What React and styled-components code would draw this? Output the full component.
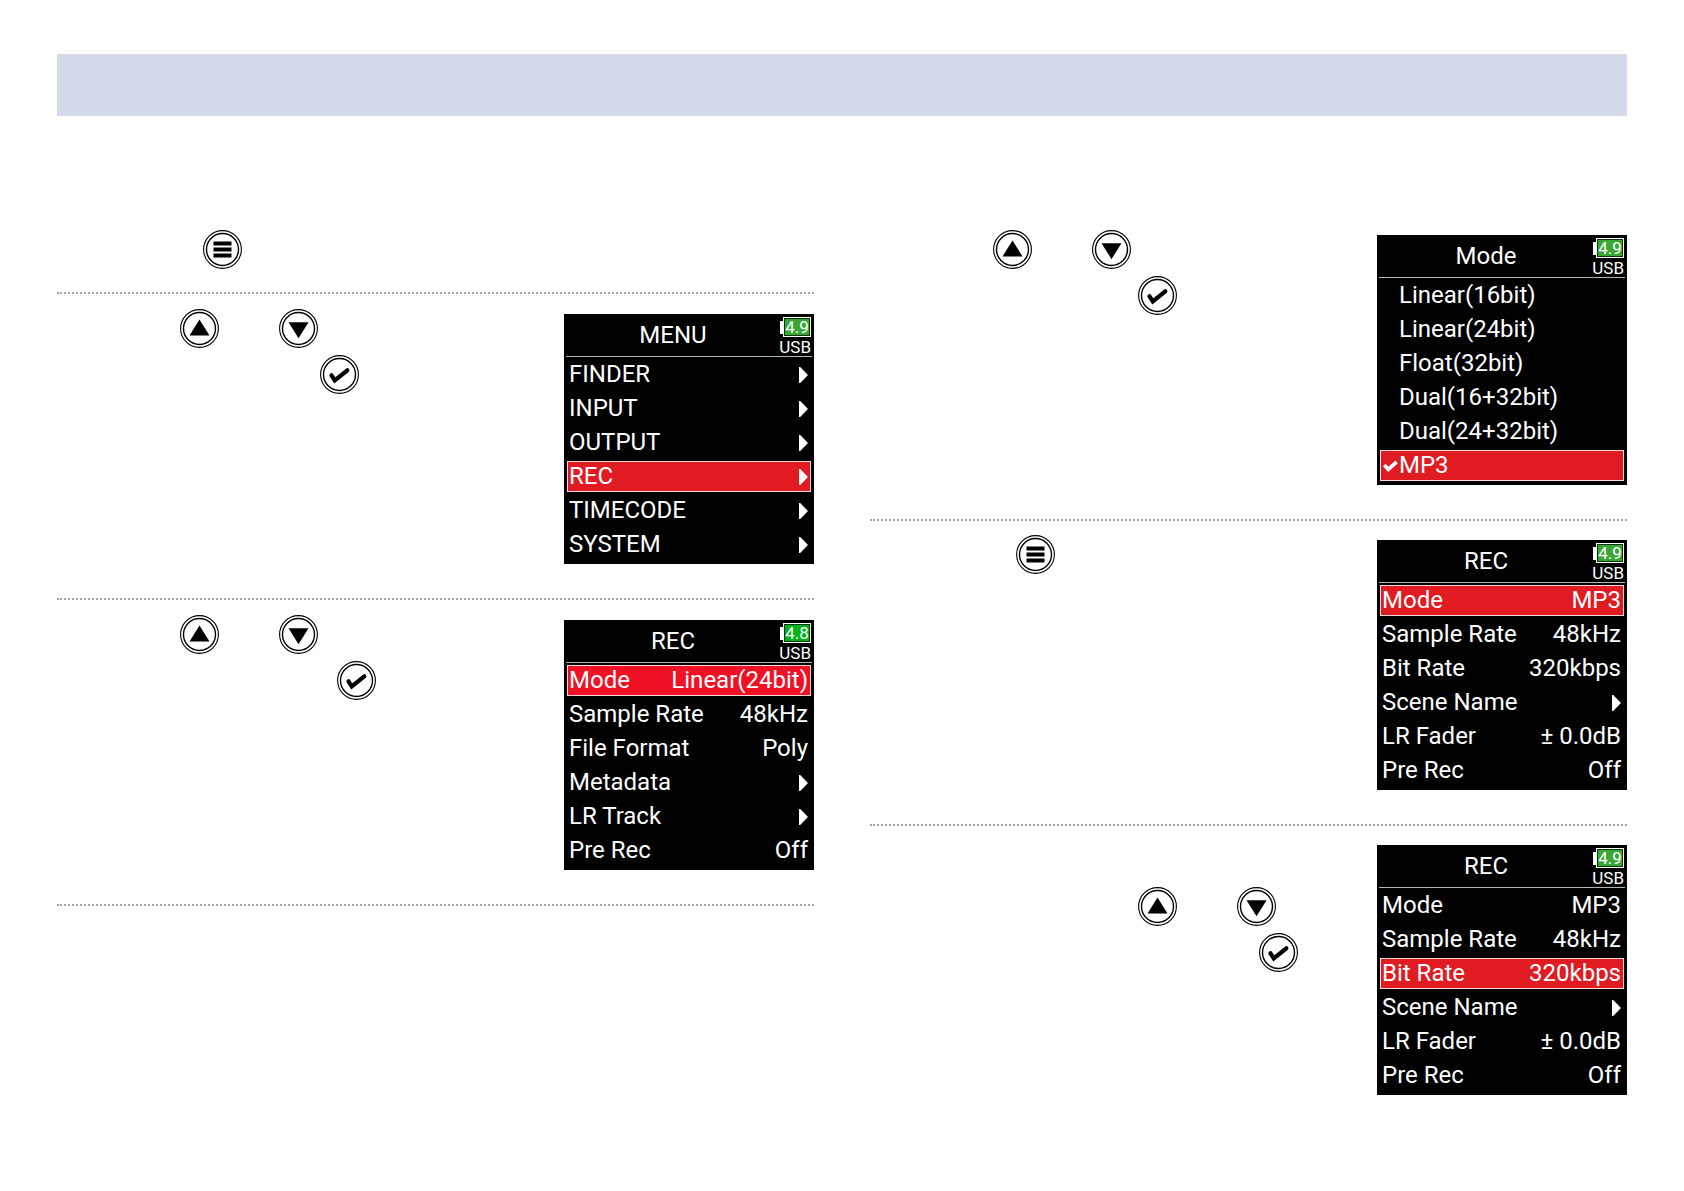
import React from "react";
import styled, { createGlobalStyle } from "styled-components";

const GlobalStyle = createGlobalStyle`
  * { box-sizing: border-box; }
  body { margin: 0; background: #fff; }
  body, button {
    font-family: Roboto, "Liberation Sans", sans-serif;
  }
`;

const Page = styled.div`
  padding: 54px 57px;
`;

const Banner = styled.header`
  height: 62px;
  background: #d5daea;
`;

const Columns = styled.main`
  display: grid;
  grid-template-columns: 1fr 1fr;
  column-gap: 56px;
  align-items: start;
  padding-top: 99px;
`;

const Column = styled.div`
  display: flex;
  flex-direction: column;
`;

const Step = styled.section`
  display: flex;
  justify-content: space-between;
  align-items: flex-start;
  padding: ${(p) => (p.$tight ? 14 : 15)}px 0 23px;
  border-bottom: ${(p) => (p.$ruled ? "2px dotted #a3a3a3" : "0")};
`;

const Instructions = styled.div`
  display: flex;
  flex-direction: column;
  gap: 7px;
  padding-top: ${(p) => (p.$skipLine ? 47 : 0)}px;
`;

const KeyLine = styled.div`
  display: flex;
  gap: 60px;
  padding-left: ${(p) => p.$indent}px;
`;

const KeyButton = styled.button`
  display: block;
  width: 39px;
  height: 39px;
  padding: 0;
  border: 0;
  background: none;

  svg { display: block; width: 39px; height: 39px; }
`;

const Lcd = styled.div`
  flex: none;
  width: 250px;
  height: 250px;
  margin: 5px 0 11px;
  background: #000;
  color: #fff;
`;

const LcdHeader = styled.div`
  display: flex;
  height: 43px;
  margin: 0 2px;
  border-bottom: 1px solid #b4b4b4;
`;

const LcdTitle = styled.h2`
  flex: 1;
  margin: 0;
  font-size: 24px;
  font-weight: 400;
  line-height: 43px;
  text-align: center;
`;

const Status = styled.div`
  display: flex;
  flex-direction: column;
  align-items: flex-end;
  width: 32px;
  padding: 3px 1px 0 0;
`;

const Battery = styled.div`
  display: flex;
  align-items: center;

  &::before {
    content: "";
    width: 3px;
    height: 13px;
    background: #fff;
  }
`;

const Charge = styled.span`
  width: 28px;
  height: 20px;
  border: 1px solid #fff;
  background: ${(p) => (p.$bright ? "#00b31b" : "#3ba536")};
  box-shadow: inset 0 0 0 1px #063806;
  font-size: 17px;
  line-height: 19px;
  text-align: center;
`;

const Power = styled.span`
  font-size: 17px;
  line-height: 20px;
`;

const Rows = styled.ul`
  display: flex;
  flex-direction: column;
  gap: 3px;
  margin: 0;
  padding: 2px 3px 0;
  list-style: none;
`;

const RowButton = styled.button`
  display: flex;
  align-items: center;
  justify-content: space-between;
  width: 100%;
  height: 31px;
  padding: 0 2px 0 ${(p) => (p.$choice ? 18 : 1)}px;
  border: 1px solid ${(p) => (p.$active ? "#ffd9d9" : "transparent")};
  background: ${(p) => (p.$active ? (p.$bright ? "#f01124" : "#e01b22") : "transparent")};
  color: #fff;
  font-size: 24px;
  line-height: 29px;
  white-space: pre;

  ${(p) => p.$checked && "justify-content: flex-start; padding-left: 2px; gap: 1px;"}
`;

const RowArrow = styled.svg`
  width: 9px;
  height: 16px;
`;

const Tick = styled.svg`
  width: 15px;
  height: 12px;
`;

const GLYPHS = {
  Menu: <path d="M10.5 11.5h18v4h-18zM10.5 17.5h18v4h-18zM10.5 23.5h18v4h-18z" />,
  Up: <path d="M19.5 10.5 29.5 26.500h-20z" />,
  Down: <path d="M9.5 13.2h20l-10 16z" />,
  Enter: (
    <path d="M11.5 20.3 14.8 25.5 27.3 15.3" fill="none" stroke="#000" strokeWidth="4.2" strokeLinecap="round" strokeLinejoin="miter" />
  ),
};

function Key({ name }) {
  return (
    <KeyButton type="button" aria-label={name}>
      <svg viewBox="0 0 39 39" aria-hidden="true">
        <circle cx="19.5" cy="19.5" r="18.9" fill="#fff" stroke="#000" strokeWidth="1.1" />
        <circle cx="19.5" cy="19.5" r="16" fill="none" stroke="#000" strokeWidth="1.4" />
        {GLYPHS[name]}
      </svg>
    </KeyButton>
  );
}

function Row({ label, value, arrow, active, bright, choice, checked }) {
  return (
    <li>
      <RowButton type="button" $active={active} $bright={bright} $choice={choice} $checked={checked}>
        {checked && (
          <Tick viewBox="0 0 15 12" aria-hidden="true">
            <path d="M1.3 5 5.2 9.300 13.6 2" fill="none" stroke="#fff" strokeWidth="3.7" />
          </Tick>
        )}
        <span>{label}</span>
        {value && <span>{value}</span>}
        {arrow && (
          <RowArrow viewBox="0 0 9 16" aria-hidden="true">
            <path d="M0 0h1.2L9 8l-7.800 8H0z" fill="#fff" />
          </RowArrow>
        )}
      </RowButton>
    </li>
  );
}

function Screen({ title, charge, bright, rows }) {
  return (
    <Lcd>
      <LcdHeader>
        <LcdTitle>{title}</LcdTitle>
        <Status>
          <Battery>
            <Charge $bright={bright}>{charge}</Charge>
          </Battery>
          <Power>USB</Power>
        </Status>
      </LcdHeader>
      <Rows>
        {rows.map((row) => (
          <Row key={row.label} bright={bright} {...row} />
        ))}
      </Rows>
    </Lcd>
  );
}

const MENU_ROWS = ["FINDER", "INPUT", "OUTPUT", "REC", "TIMECODE", "SYSTEM"].map((label) => ({
  label,
  arrow: true,
  active: label === "REC",
}));

const REC_ROWS = [
  { label: "Mode", value: "Linear(24bit)", active: true },
  { label: "Sample Rate", value: "48kHz" },
  { label: "File Format", value: "Poly" },
  { label: "Metadata", arrow: true },
  { label: "LR Track", arrow: true },
  { label: "Pre Rec", value: "Off" },
];

const MODE_ROWS = [
  { label: "Linear(16bit)", choice: true },
  { label: "Linear(24bit)", choice: true },
  { label: "Float(32bit)", choice: true },
  { label: "Dual(16+32bit)", choice: true },
  { label: "Dual(24+32bit)", choice: true },
  { label: "MP3", checked: true, active: true },
];

const mp3Rows = (selected) =>
  [
    { label: "Mode", value: "MP3" },
    { label: "Sample Rate", value: "48kHz" },
    { label: "Bit Rate", value: "320kbps" },
    { label: "Scene Name", arrow: true },
    { label: "LR Fader", value: "± 0.0dB" },
    { label: "Pre Rec", value: "Off" },
  ].map((row) => ({ ...row, active: row.label === selected }));

export default function App() {
  return (
    <>
      <GlobalStyle />
      <Page>
        <Banner />
        <Columns>
          <Column>
            <Step $ruled>
              <Instructions>
                <KeyLine $indent={146}><Key name="Menu" /></KeyLine>
              </Instructions>
            </Step>
            <Step $ruled>
              <Instructions>
                <KeyLine $indent={123}><Key name="Up" /><Key name="Down" /></KeyLine>
                <KeyLine $indent={263}><Key name="Enter" /></KeyLine>
              </Instructions>
              <Screen title="MENU" charge="4.9" rows={MENU_ROWS} />
            </Step>
            <Step $ruled>
              <Instructions>
                <KeyLine $indent={123}><Key name="Up" /><Key name="Down" /></KeyLine>
                <KeyLine $indent={280}><Key name="Enter" /></KeyLine>
              </Instructions>
              <Screen title="REC" charge="4.8" bright rows={REC_ROWS} />
            </Step>
          </Column>
          <Column>
            <Step $ruled>
              <Instructions>
                <KeyLine $indent={123}><Key name="Up" /><Key name="Down" /></KeyLine>
                <KeyLine $indent={268}><Key name="Enter" /></KeyLine>
              </Instructions>
              <Screen title="Mode" charge="4.9" rows={MODE_ROWS} />
            </Step>
            <Step $tight $ruled>
              <Instructions>
                <KeyLine $indent={146}><Key name="Menu" /></KeyLine>
              </Instructions>
              <Screen title="REC" charge="4.9" rows={mp3Rows("Mode")} />
            </Step>
            <Step $tight>
              <Instructions $skipLine>
                <KeyLine $indent={268}><Key name="Up" /><Key name="Down" /></KeyLine>
                <KeyLine $indent={389}><Key name="Enter" /></KeyLine>
              </Instructions>
              <Screen title="REC" charge="4.9" rows={mp3Rows("Bit Rate")} />
            </Step>
          </Column>
        </Columns>
      </Page>
    </>
  );
}
